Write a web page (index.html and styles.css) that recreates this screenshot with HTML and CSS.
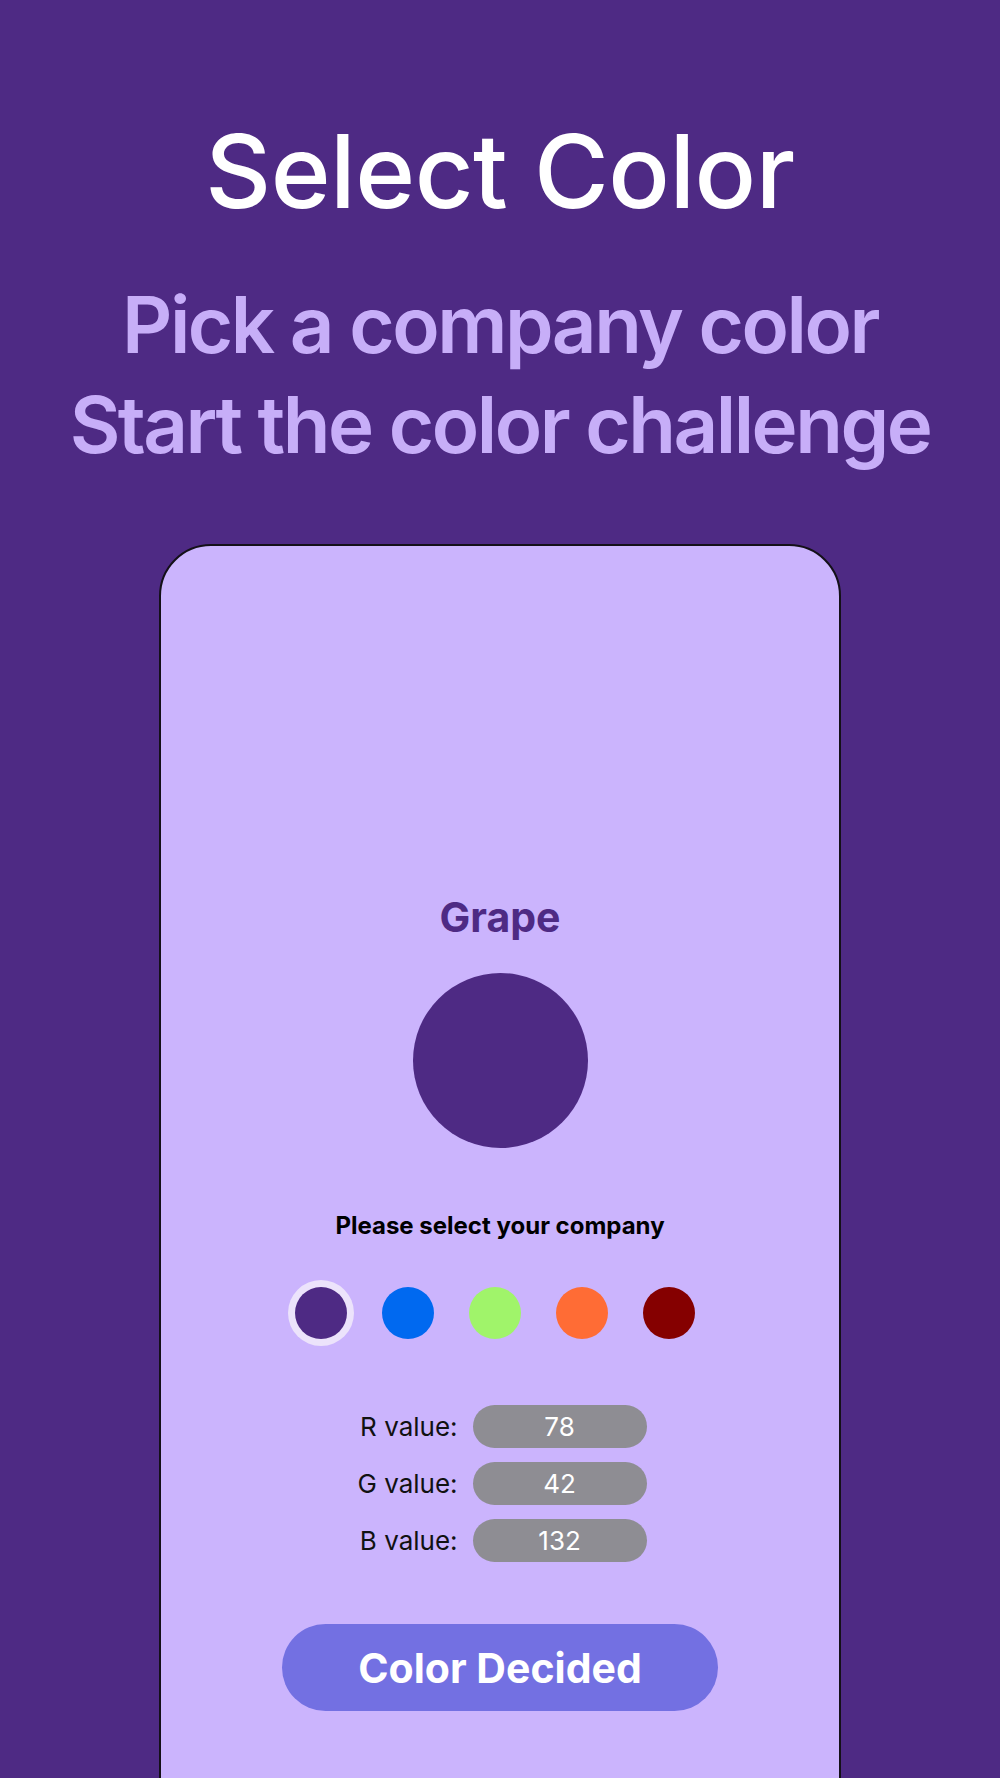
FILE: index.html
```html
<!DOCTYPE html>
<html lang="en">
<head>
    <meta charset="UTF-8">
    <meta name="viewport" content="width=device-width, initial-scale=1.0">
    <title>Select Color</title>
    <link rel="stylesheet" href="styles.css">
</head>

<body>
    <header class="intro">
        <h1 class="title">Select Color</h1>
        <p class="subtitle">Pick a company color<br>Start the color challenge</p>
    </header>

    <main class="phone">
        <h2 class="color-name">Grape</h2>
        <div class="preview"></div>

        <p class="prompt">Please select your company</p>

        <div class="swatches">
            <span class="swatch grape selected"></span>
            <span class="swatch blue"></span>
            <span class="swatch lime"></span>
            <span class="swatch orange"></span>
            <span class="swatch maroon"></span>
        </div>

        <div class="values">
            <span class="label">R value:</span>
            <span class="pill">78</span>
            <span class="label">G value:</span>
            <span class="pill">42</span>
            <span class="label">B value:</span>
            <span class="pill">132</span>
        </div>

        <button class="decide">Color Decided</button>
    </main>
</body>
</html>
```

FILE: styles.css
```css
html, body {
    height: 1778px;
}
body {
    margin: 0;
    overflow: hidden;
    background-color: #4e2a84;
    font-family: Inter, "Noto Sans", sans-serif;
    text-align: center;
}
.intro {
    padding-top: 110px;
}
.title {
    margin: 0;
    color: #ffffff;
    font-size: 102px;
    font-weight: 500;
    letter-spacing: -0.5px;
    line-height: 1.2;
}
.subtitle {
    margin: 43px 0 0;
    color: #c7aef8;
    font-size: 78px;
    font-weight: 600;
    letter-spacing: -2.5px;
    line-height: 100px;
}
.phone {
    width: 682px;
    height: 1300px;
    margin: 69px auto 0;
    padding-top: 347px;
    box-sizing: border-box;
    border: 2px solid #141018;
    border-radius: 52px;
    background-color: #cbb4fd;
    display: flex;
    flex-direction: column;
    align-items: center;
}
.color-name {
    margin: 0;
    color: #4e2a84;
    font-size: 41px;
    font-weight: 700;
    line-height: 1.2;
}
.preview {
    width: 175px;
    height: 175px;
    margin-top: 30px;
    border-radius: 50%;
    background-color: #4e2a84;
}
.prompt {
    margin: 64px 0 0;
    color: #000000;
    font-size: 24px;
    font-weight: 700;
    line-height: 1.2;
}
.swatches {
    display: flex;
    gap: 35px;
    margin-top: 47px;
    margin-right: 10px;
}
.swatch {
    width: 52px;
    height: 52px;
    border-radius: 50%;
}
.swatch.selected {
    box-shadow: 0 0 0 7px #ece3fb;
}
.grape { background-color: #4e2a84; }
.blue { background-color: #0069f0; }
.lime { background-color: #a0f46a; }
.orange { background-color: #ff6c35; }
.maroon { background-color: #850000; }
.values {
    display: grid;
    grid-template-columns: auto 174px;
    column-gap: 15px;
    row-gap: 14px;
    align-items: center;
    margin-top: 66px;
    margin-left: 4px;
}
.label {
    text-align: right;
    color: #111111;
    font-size: 26px;
}
.pill {
    height: 43px;
    line-height: 43px;
    border-radius: 22px;
    background-color: #8e8d93;
    color: #ffffff;
    font-size: 26px;
}
.decide {
    width: 436px;
    height: 87px;
    margin-top: 62px;
    border: none;
    border-radius: 44px;
    background-color: #7370e2;
    color: #ffffff;
    font-family: inherit;
    font-size: 41px;
    font-weight: 700;
    cursor: pointer;
}
```
